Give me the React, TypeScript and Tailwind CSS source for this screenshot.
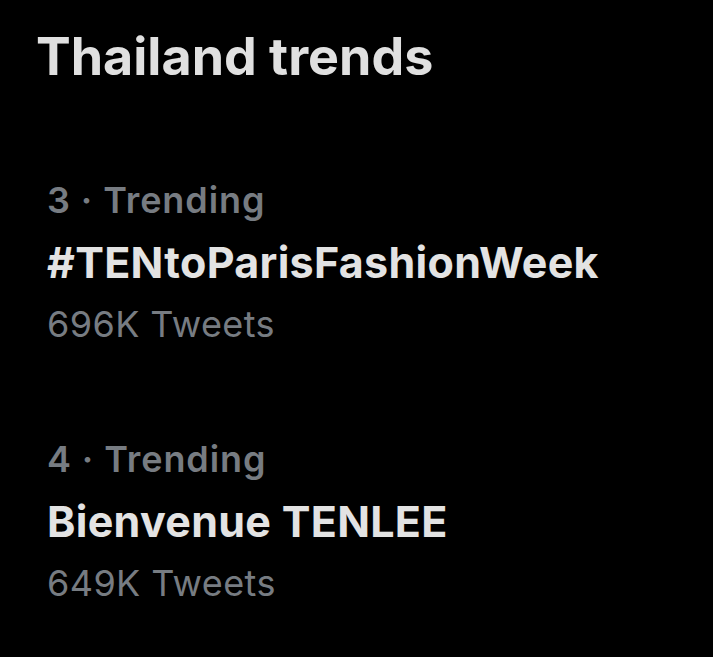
const trends = [
  { rank: 3, name: '#TENtoParisFashionWeek', count: '696K Tweets' },
  { rank: 4, name: 'Bienvenue TENLEE', count: '649K Tweets' },
];

export default function App() {
  return (
    <div className="w-[713px] h-[657px] bg-black overflow-hidden" style={{ fontFamily: 'Inter, "Liberation Sans", sans-serif' }}>
      <h1 className="pl-[36px] pt-[25px] text-[52px] leading-[64px] font-bold text-[#e0e0e0]">
        Thailand trends
      </h1>

      {/* trend list */}
      <div className="mt-[91px] flex flex-col gap-[95px] pl-[47px]">
        {trends.map(t => (
          <div key={t.rank} className="flex flex-col">
            <div className="text-[36px] leading-[40px] font-semibold text-[#777c82] tracking-[0.9px]">
              {t.rank} · Trending
            </div>
            <div className="mt-[18px] text-[43px] leading-[48px] font-bold text-[#e3e3e3] tracking-[0.3px]">
              {t.name}
            </div>
            <div className="mt-[18px] text-[36px] leading-[40px] text-[#777c82] tracking-[0.4px]">{t.count}</div>
          </div>
        ))}
      </div>
    </div>
  );
}
